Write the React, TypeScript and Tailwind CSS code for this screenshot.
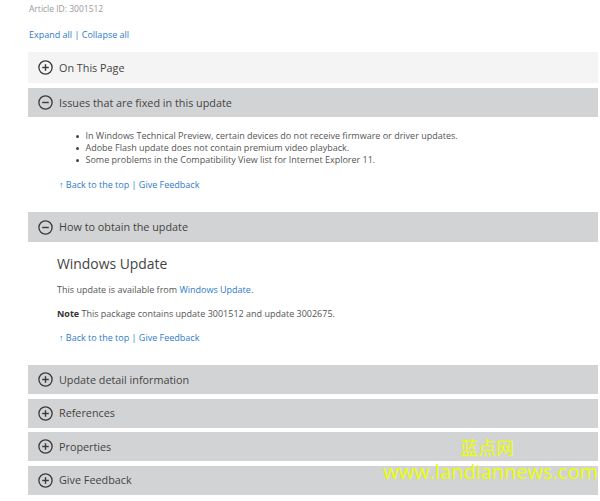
import React from 'react';

const FONT = { fontFamily: '"Open Sans", "Noto Sans", Arial, sans-serif' };

function CircleIcon({ open }: { open: boolean }) {
  return (
    <svg width="15" height="15" viewBox="0 0 15 15" className="shrink-0">
      <circle cx="7.5" cy="7.5" r="6.6" fill="none" stroke="#3a3a3a" strokeWidth="1.3" />
      <line x1="4.2" y1="7.5" x2="10.8" y2="7.5" stroke="#3a3a3a" strokeWidth="1.4" />
      {!open && <line x1="7.5" y1="4.2" x2="7.5" y2="10.8" stroke="#3a3a3a" strokeWidth="1.4" />}
    </svg>
  );
}

function SectionBar({ title, open, light, h = 'h-[30px]' }: { title: string; open?: boolean; light?: boolean; h?: string }) {
  return (
    <div className={`${h} flex items-center gap-[6.5px] pl-[9.5px] ${light ? 'bg-[#f4f4f4]' : 'bg-[#d2d3d5]'}`}>
      <CircleIcon open={!!open} />
      <span className="text-[10.8px] leading-[14px] text-[#444]">{title}</span>
    </div>
  );
}

function BackLinks() {
  return (
    <div className="text-[9px] leading-[12px] text-[#2e7bc9] pl-[31px]">
      ↑ Back to the top | Give Feedback
    </div>
  );
}

const issues = [
  'In Windows Technical Preview, certain devices do not receive firmware or driver updates.',
  'Adobe Flash update does not contain premium video playback.',
  'Some problems in the Compatibility View list for Internet Explorer 11.',
];

export default function App() {
  return (
    <div className="relative w-[600px] h-[501px] bg-white overflow-hidden" style={FONT}>
      <div className="pl-[28px] pr-[2px]">
        <div className="pt-[3px] pl-[1px] text-[8.5px] leading-[12px] text-[#999]">Article ID: 3001512</div>
        <div className="mt-[14px] pl-[1px] text-[9px] leading-[12px] text-[#2e7bc9]">Expand all | Collapse all</div>

        <div className="mt-[11px]">
          <SectionBar title="On This Page" light h="h-[31px]" />
        </div>
        <div className="mt-[5px]">
          <SectionBar title="Issues that are fixed in this update" open h="h-[29px]" />
        </div>
        <ul className="mt-[13px] pl-[47.5px] text-[9px] leading-[12px] text-[#555]">
          {issues.map((t) => (
            <li key={t} className="flex items-center gap-[7px]">
              <span className="w-[3px] h-[3px] rounded-full bg-[#444] shrink-0" />
              <span>{t}</span>
            </li>
          ))}
        </ul>
        <div className="mt-[13px]">
          <BackLinks />
        </div>

        <div className="mt-[21px]">
          <SectionBar title="How to obtain the update" open />
        </div>
        <div className="pl-[29px]">
          <div className="mt-[13px] text-[13.9px] leading-[18px] text-[#444]">Windows Update</div>
          <div className="mt-[11px] text-[9px] leading-[12px] text-[#555]">
            This update is available from <span className="text-[#2e7bc9]">Windows Update</span>.
          </div>
          <div className="mt-[12px] text-[9px] leading-[12px] text-[#555]">
            <span className="font-bold text-[#333]">Note</span> This package contains update 3001512 and update 3002675.
          </div>
        </div>
        <div className="mt-[12px]">
          <BackLinks />
        </div>

        <div className="mt-[21px] flex flex-col gap-[4.5px]">
          <SectionBar title="Update detail information" h="h-[29px]" />
          <SectionBar title="References" h="h-[29px]" />
          <SectionBar title="Properties" h="h-[29px]" />
          <SectionBar title="Give Feedback" h="h-[29px]" />
        </div>
      </div>

      <div className="absolute left-[460px] top-[436px] text-[18px] leading-[22px] text-[#eaff00]" style={{ fontFamily: '"Noto Sans CJK SC", sans-serif' }}>蓝点网</div>
      <div className="absolute left-[383px] top-[459px] text-[20px] leading-[26px] text-[#eaff00]" style={{ fontFamily: '"Open Sans", sans-serif' }}>www.landiannews.com</div>
    </div>
  );
}
